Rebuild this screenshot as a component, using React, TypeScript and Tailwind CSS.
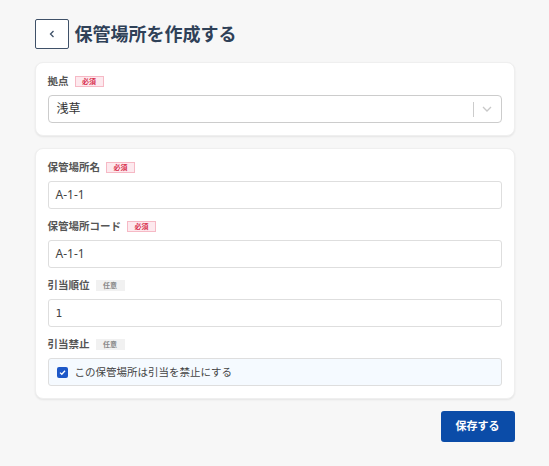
import React from "react";

const font = { fontFamily: '"Noto Sans", "Noto Sans CJK JP", sans-serif' };

function Badge({ required }: { required: boolean }) {
  return required ? (
    <span className="ml-[6px] inline-flex h-[11px] w-[29px] items-center justify-center border border-[#f6b9c5] bg-[#fde9ee] text-[7px] font-bold leading-none text-[#d8314f]">
      必須
    </span>
  ) : (
    <span className="ml-[6px] inline-flex h-[11px] w-[29px] items-center justify-center bg-[#f1f1f1] text-[7px] font-bold leading-none text-[#888]">
      任意
    </span>
  );
}

function Label({ text, required }: { text: string; required: boolean }) {
  return (
    <div className="flex h-4 items-center">
      <span className="text-[10.5px] font-bold leading-none text-[#555]">{text}</span>
      <Badge required={required} />
    </div>
  );
}

function TextField({ value, mono }: { value: string; mono?: boolean }) {
  return (
    <div className="mt-[6px] flex h-[28px] items-center rounded-[3px] border border-[#dedede] bg-white px-[7px]">
      <span
        className="text-[12px] leading-none text-[#444]"
        style={mono ? { fontFamily: '"DejaVu Sans Mono", monospace', fontSize: 11 } : undefined}
      >
        {value}
      </span>
    </div>
  );
}

export default function App() {
  return (
    <div className="min-h-[466px] bg-[#f7f7f7]" style={font}>
      <div className="mx-auto w-[480px] pt-[19px]">
        <div className="flex items-center">
          <button className="flex h-[30px] w-[34px] items-center justify-center rounded-[2px] border border-[#3f5168] bg-white">
            <svg width="6" height="8" viewBox="0 0 6 8" fill="none">
              <path d="M4.5 1 L1.5 4 L4.5 7" stroke="#3f5168" strokeWidth="1.3" />
            </svg>
          </button>
          <h1 className="ml-[6px] text-[18px] font-bold leading-none text-[#2f4158]">保管場所を作成する</h1>
        </div>

        <div className="mt-[13px] rounded-[8px] border border-[#efefef] bg-white px-3 pb-[12px] pt-[10px] shadow-[0_1px_2px_rgba(0,0,0,0.08)]">
          <Label text="拠点" required />
          <div className="mt-[6px] flex h-[28px] items-center rounded-[4px] border border-[#cccccc] bg-white pl-[8px]">
            <span className="flex-1 text-[12px] leading-none text-[#333]">浅草</span>
            <div className="h-[15px] w-px bg-[#cccccc]" />
            <div className="flex w-[27px] items-center justify-center">
              <svg width="10" height="6" viewBox="0 0 10 6" fill="none">
                <path d="M1 1 L5 5 L9 1" stroke="#c8c8c8" strokeWidth="1.3" />
              </svg>
            </div>
          </div>
        </div>

        <div className="mt-[12px] rounded-[8px] border border-[#efefef] bg-white px-3 pb-[12px] pt-[10px] shadow-[0_1px_2px_rgba(0,0,0,0.08)]">
          <Label text="保管場所名" required />
          <TextField value="A-1-1" />
          <div className="mt-[9px]">
            <Label text="保管場所コード" required />
          </div>
          <TextField value="A-1-1" />
          <div className="mt-[9px]">
            <Label text="引当順位" required={false} />
          </div>
          <TextField value="1" mono />
          <div className="mt-[9px]">
            <Label text="引当禁止" required={false} />
          </div>
          <div className="mt-[6px] flex h-[28px] items-center rounded-[3px] border border-[#dedede] bg-[#f5faff] pl-[8px]">
            <span className="flex h-[11px] w-[11px] items-center justify-center rounded-[2px] bg-[#1d58c8]">
              <svg width="9" height="9" viewBox="0 0 9 9" fill="none">
                <path d="M2 4.6 L3.8 6.3 L7 2.8" stroke="white" strokeWidth="1.3" />
              </svg>
            </span>
            <span className="ml-[7px] text-[10.5px] leading-none text-[#444]">この保管場所は引当を禁止にする</span>
          </div>
        </div>

        <div className="mt-[12px] flex justify-end">
          <button className="flex h-[31px] w-[74px] items-center justify-center rounded-[3px] bg-[#0b4ca8] text-[11px] font-bold text-white">
            保存する
          </button>
        </div>
      </div>
    </div>
  );
}
